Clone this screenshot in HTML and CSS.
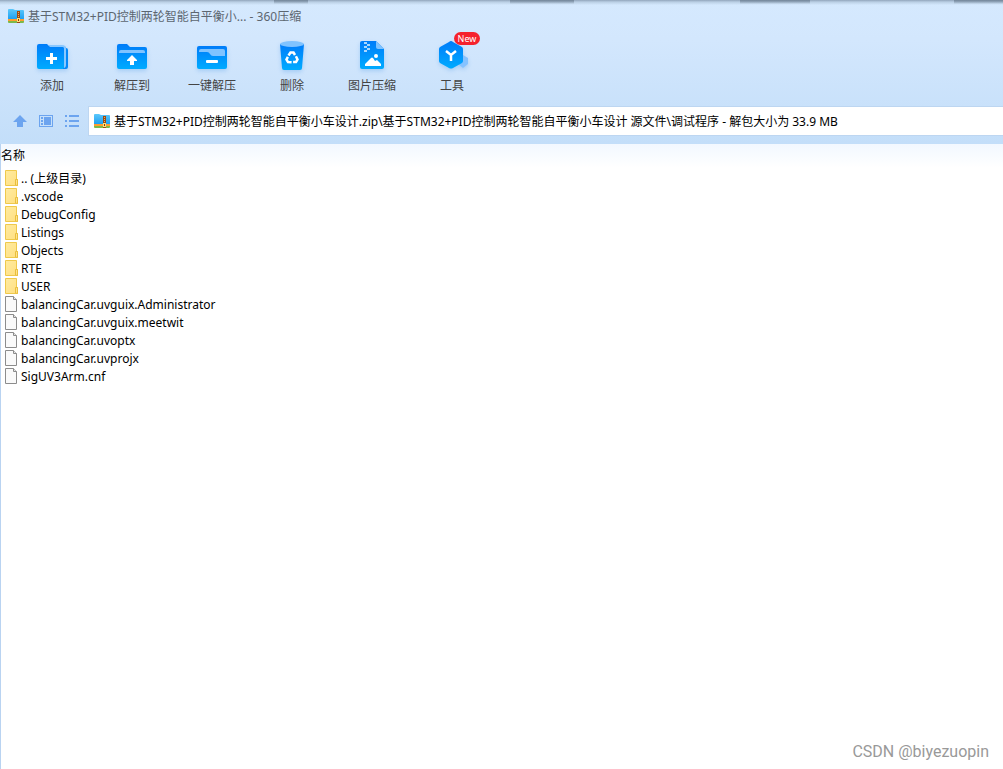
FILE: index.html
```
<!DOCTYPE html>
<html lang="zh-CN">
<head>
    <meta charset="UTF-8">
    <meta name="viewport" content="width=device-width, initial-scale=1.0">
    <title>360压缩</title>
    <link rel="stylesheet" href="styles.css">
</head>
<body>
    <!-- Shared icons -->
    <svg class="symbols" aria-hidden="true">
        <defs>
            <linearGradient id="blue" x1="0" y1="0" x2="0" y2="1">
                <stop offset="0" stop-color="#007cf9"/>
                <stop offset="1" stop-color="#00abff"/>
            </linearGradient>
            <linearGradient id="sky" x1="0" y1="0" x2="0" y2="1">
                <stop offset="0" stop-color="#5cc8fb"/>
                <stop offset="1" stop-color="#1ea0f2"/>
            </linearGradient>
            <linearGradient id="yellow" x1="0" y1="0" x2="1" y2="1">
                <stop offset="0" stop-color="#ffebA0"/>
                <stop offset="1" stop-color="#ffdf80"/>
            </linearGradient>
        </defs>
        <symbol id="zip" viewBox="0 0 16 14">
            <path d="M0 1q0-1 1-1h4l2 1h8q1 0 1 1v8H0z" fill="url(#sky)"/>
            <path d="M0 10h16v2H0z" fill="#ff9d2e"/>
            <path d="M0 12h16v1q0 1-1 1H1q-1 0-1-1z" fill="#7cb94a"/>
            <path d="M9 2h3v12H9z" fill="#9b4a12"/>
            <path d="M10 3h1v1h-1zM10 5h1v1h-1zM10 7h1v1h-1z" fill="#e3ab66"/>
            <path d="M9 9h3v4H9z" fill="#ffdf78"/>
            <path d="M10 10h1v2h-1z" fill="#7a3a10"/>
        </symbol>
        <symbol id="folder" viewBox="0 0 13 16">
            <path d="M.5.5h11v9h1v6H.5z" fill="url(#yellow)" stroke="#efc94c"/>
            <path d="M10.500 15V9.500h2v6z" fill="#ffe38c" stroke="#e9bf3e"/>
        </symbol>
        <symbol id="file" viewBox="0 0 13 16">
            <path d="M.5.5h8l3 3v12H.5z" fill="#fafafa" stroke="#8c8c8c"/>
            <path d="M8.500.5v3h3" fill="#e5e5e5" stroke="#8c8c8c"/>
        </symbol>
    </svg>

    <div class="window">
        <header class="title-bar">
            <svg class="zip-icon"><use href="#zip"/></svg>
            <h1>基于STM32+PID控制两轮智能自平衡小... - 360压缩</h1>
        </header>

        <div class="toolbar">
            <button class="tool">
                <svg viewBox="0 0 32 32">
                    <path d="M13 5h14q3 0 3 3v18h-17z" fill="#0588f8"/>
                    <path d="M13 5h13q3 0 3 3v18" fill="none" stroke="#8ac8ff" stroke-width="2"/>
                    <path d="M1 5q0-2 2-2h8l3 3h12q2 0 2 2v20H3q-2 0-2-2z" fill="url(#blue)"/>
                    <path d="M30 7q2 0 2 2v17q0 2-2 2h-3v-1q3 0 3-3z" fill="#0588f8"/>
                    <path d="M10 17.500h11M15.500 12v11" stroke="#fff" stroke-width="3"/>
                </svg>
                <span>添加</span>
            </button>
            <button class="tool">
                <svg viewBox="0 0 32 32">
                    <path d="M1 5q0-2 2-2h8l3 3h15q2 0 2 2v18q0 2-2 2H3q-2 0-2-2z" fill="url(#blue)"/>
                    <path d="M3 12v-1q0-2 2-2h22q2 0 2 2v1z" fill="#80c3ff"/>
                    <path d="M16 14l5 5v1h-3v4h-4v-4h-3v-1z" fill="#fff"/>
                </svg>
                <span>解压到</span>
            </button>
            <button class="tool">
                <svg viewBox="0 0 32 32">
                    <rect x="1" y="5" width="30" height="23" rx="2" fill="url(#blue)"/>
                    <path d="M3 11v-1q0-2 2-2h22q2 0 2 2v5H17q-2 0-3-2t-3-2z" fill="#80c3ff"/>
                    <rect x="10" y="19" width="12" height="3" rx="1" fill="#fff"/>
                </svg>
                <span>一键解压</span>
            </button>
            <button class="tool">
                <svg viewBox="0 0 32 32">
                    <path d="M4 3l2 24q0 2 2 2h16q2 0 2-2l2-24z" fill="url(#blue)"/>
                    <ellipse cx="16" cy="3" rx="12" ry="3" fill="#80c3ff"/>
                    <g fill="none" stroke="#fff" stroke-width="2.500">
                        <path d="M12.500 14.500l2-3h3l1.500 2.500"/>
                        <path d="M12.500 14.500l2-3h3l1.500 2.500" transform="rotate(120 16 17)"/>
                        <path d="M12.500 14.500l2-3h3l1.500 2.500" transform="rotate(240 16 17)"/>
                    </g>
                </svg>
                <span>删除</span>
            </button>
            <button class="tool">
                <svg viewBox="0 0 32 32">
                    <path d="M4 2q0-2 2-2h14l8 8v18q0 2-2 2H6q-2 0-2-2z" fill="url(#blue)"/>
                    <path d="M20 0l8 8h-6q-2 0-2-2z" fill="#80c3ff"/>
                    <path d="M8 1h3v2H8zM11 3h3v2h-3zM8 5h3v2H8zM11 7h3v2h-3zM8 9h3v2H8z" fill="#a9d7ff"/>
                    <path d="M9 25v-2l6-6q1-1 2 0l2 3 2-1 4 4v2z" fill="#fff"/>
                    <circle cx="20" cy="15" r="2" fill="#fff"/>
                </svg>
                <span>图片压缩</span>
            </button>
            <button class="tool">
                <svg viewBox="0 0 32 32">
                    <path d="M27 14l5 3v6l-5 4-5-4v-6z" fill="#85c2ff"/>
                    <path d="M15 0q1 0 2 1l9 5q1 1 1 2v12q0 1-1 2l-9 5q-2 1-4 0l-9-5q-1-1-1-2V8q0-1 1-2l9-5q1-1 2-1z" fill="url(#blue)"/>
                    <path d="M10 10l5 4 5-4M15 14v6" fill="none" stroke="#fff" stroke-width="2.500"/>
                </svg>
                <span>工具</span>
                <em class="badge">New</em>
            </button>
        </div>

        <nav class="nav-bar">
            <button class="nav-button" aria-label="向上">
                <svg viewBox="0 0 16 16"><path d="M8 2l7 7h-4v5H5V9H1z" fill="#6ca4ef"/></svg>
            </button>
            <button class="nav-button" aria-label="详情">
                <svg viewBox="0 0 16 16" shape-rendering="crispEdges">
                    <path d="M1.500 2.500h13v11h-13z" fill="none" stroke="#6ca4ef"/>
                    <path d="M3 4h2v2H3zM3 7h2v2H3zM3 10h2v2H3zM6 4h7v8H6z" fill="#6ca4ef"/>
                </svg>
            </button>
            <button class="nav-button" aria-label="列表">
                <svg viewBox="0 0 16 16" shape-rendering="crispEdges">
                    <path d="M1 2h2v2H1zM5 2h10v2H5zM1 7h2v2H1zM5 7h10v2H5zM1 12h2v2H1zM5 12h10v2H5z" fill="#6ca4ef"/>
                </svg>
            </button>
            <label class="address">
                <svg class="zip-icon"><use href="#zip"/></svg>
                <input type="text" aria-label="路径" value="基于STM32+PID控制两轮智能自平衡小车设计.zip\基于STM32+PID控制两轮智能自平衡小车设计 源文件\调试程序 - 解包大小为 33.9 MB">
            </label>
        </nav>

        <main class="content">
            <table class="files">
                <thead>
                    <tr><th>名称</th></tr>
                </thead>
                <tbody>
                    <tr><td><svg><use href="#folder"/></svg>.. (上级目录)</td></tr>
                    <tr><td><svg><use href="#folder"/></svg>.vscode</td></tr>
                    <tr><td><svg><use href="#folder"/></svg>DebugConfig</td></tr>
                    <tr><td><svg><use href="#folder"/></svg>Listings</td></tr>
                    <tr><td><svg><use href="#folder"/></svg>Objects</td></tr>
                    <tr><td><svg><use href="#folder"/></svg>RTE</td></tr>
                    <tr><td><svg><use href="#folder"/></svg>USER</td></tr>
                    <tr><td><svg><use href="#file"/></svg>balancingCar.uvguix.Administrator</td></tr>
                    <tr><td><svg><use href="#file"/></svg>balancingCar.uvguix.meetwit</td></tr>
                    <tr><td><svg><use href="#file"/></svg>balancingCar.uvoptx</td></tr>
                    <tr><td><svg><use href="#file"/></svg>balancingCar.uvprojx</td></tr>
                    <tr><td><svg><use href="#file"/></svg>SigUV3Arm.cnf</td></tr>
                </tbody>
            </table>
            <p class="watermark">CSDN @biyezuopin</p>
        </main>
    </div>
</body>
</html>
```
FILE: styles.css
```
/* General Styles */
* {
    box-sizing: border-box;
}

body {
    margin: 0;
    font-family: "Noto Sans", "Noto Sans CJK SC", sans-serif;
    font-size: 12px;
    color: #000;
}

button {
    padding: 0;
    border: none;
    background: none;
    font: inherit;
    color: inherit;
    cursor: pointer;
}

.symbols {
    position: absolute;
    width: 0;
    height: 0;
}

.window {
    display: flex;
    flex-direction: column;
    min-height: 100vh;
    background: linear-gradient(#d5e9fe, #d3e7fd 40px, #c3def9 144px);
}

/* Title Bar */
.title-bar {
    display: flex;
    align-items: center;
    gap: 4px;
    height: 32px;
    padding-left: 8px;
    color: #5c6670;
    background:
        linear-gradient(#75889b, transparent) 274px 0 / 34px 4px no-repeat,
        linear-gradient(#75889b, transparent) 510px 0 / 64px 4px no-repeat,
        linear-gradient(#75889b, transparent) 740px 0 / 70px 4px no-repeat,
        linear-gradient(#75889b, transparent) 954px 0 / 60px 4px no-repeat,
        linear-gradient(#91a5bb, #bacfe4 2px, transparent 5px);
}

.title-bar h1 {
    margin: 0;
    font-size: 12px;
    font-weight: normal;
}

.zip-icon {
    flex: none;
    width: 16px;
    height: 14px;
}

/* Toolbar */
.toolbar {
    display: flex;
    height: 75px;
    padding: 9px 0 0 12px;
    color: #444;
}

.tool {
    position: relative;
    display: flex;
    flex-direction: column;
    align-items: center;
    gap: 4px;
    width: 80px;
    line-height: 18px;
}

.tool svg {
    width: 32px;
    height: 32px;
    overflow: visible;
    filter: drop-shadow(0 2px 2px rgba(0, 110, 220, 0.2));
}

.badge {
    position: absolute;
    top: -9px;
    right: 12px;
    width: 26px;
    border-radius: 7px;
    background: #f5222d;
    color: #fff;
    font-size: 9px;
    font-style: normal;
    line-height: 13px;
}

/* Navigation Bar */
.nav-bar {
    display: flex;
    align-items: center;
    gap: 10px;
    height: 37px;
    padding: 0 0 9px 12px;
}

.nav-button {
    width: 16px;
    height: 16px;
}

.nav-button svg {
    display: block;
}

.address {
    display: flex;
    flex: 1;
    align-items: center;
    gap: 4px;
    height: 28px;
    margin-left: -1px;
    padding-left: 5px;
    background: #fff;
    box-shadow: 0 0 0 1px #bdd6f1;
}

.address input {
    flex: 1;
    min-width: 0;
    padding: 0;
    border: none;
    outline: none;
    background: none;
    font: inherit;
    color: #000;
}

/* File List */
.content {
    display: flex;
    flex: 1;
    flex-direction: column;
    justify-content: space-between;
    border-left: 1px solid #b9d3f1;
    background: linear-gradient(#f2f8ff, #fff 24px);
}

.files {
    width: 100%;
    border-collapse: collapse;
    line-height: 18px;
}

.files th {
    height: 25px;
    padding: 0 0 2px;
    font-weight: normal;
    text-align: left;
}

.files td {
    display: flex;
    align-items: flex-start;
    gap: 3px;
    height: 18px;
    padding: 1px 0 0 4px;
    white-space: nowrap;
}

.files svg {
    width: 13px;
    height: 16px;
}

.watermark {
    margin: 0;
    padding: 0 14px 8px 0;
    color: #999;
    font-family: Roboto, sans-serif;
    font-size: 16px;
    line-height: 18px;
    text-align: right;
}
```
